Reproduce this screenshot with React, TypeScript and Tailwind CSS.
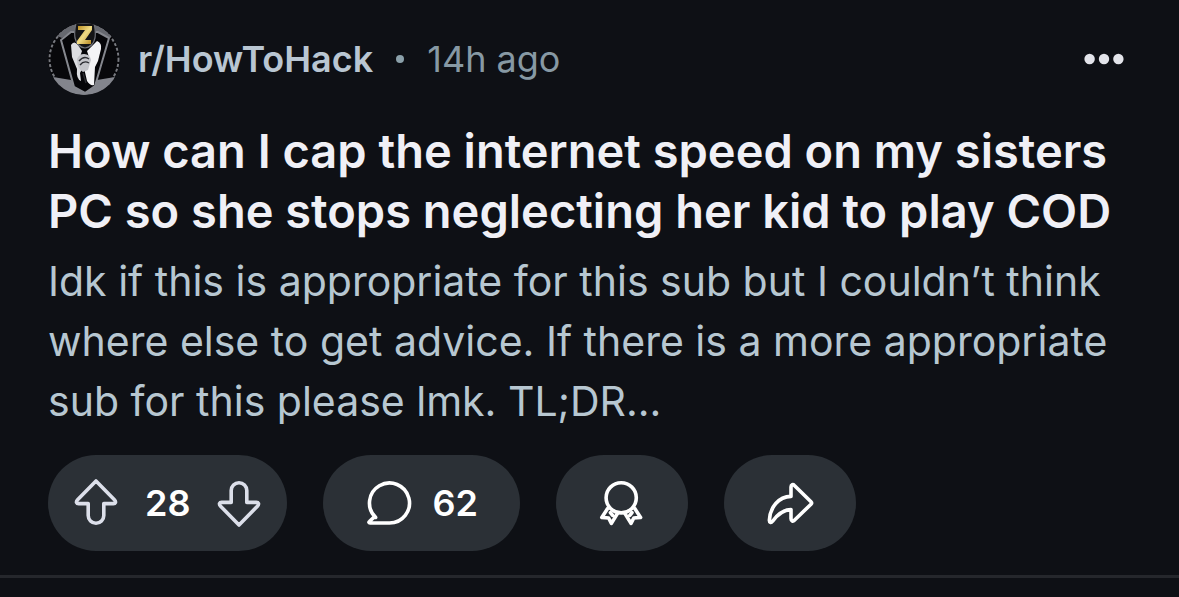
import type { ReactNode } from "react";
import { twMerge } from "tailwind-merge";

const post = {
  community: "r/HowToHack",
  age: "14h ago",
  title:
    "How can I cap the internet speed on my sisters PC so she stops neglecting her kid to play COD",
  body: "Idk if this is appropriate for this sub but I couldn’t think where else to get advice. If there is a more appropriate sub for this please lmk. TL;DR...",
  votes: 28,
  comments: 62,
};

const Icon = ({
  className,
  children,
}: {
  className?: string;
  children: ReactNode;
}) => (
  <svg
    viewBox="0 0 48 48"
    fill="none"
    stroke="currentColor"
    strokeWidth={3.6}
    strokeLinecap="round"
    strokeLinejoin="round"
    aria-hidden="true"
    className={twMerge("size-12 shrink-0", className)}
  >
    {children}
  </svg>
);

const VoteArrow = ({ className }: { className?: string }) => (
  <Icon className={className}>
    <path d="M24 2 42.4 20.8C44.5 23 43.4 24.6 41.4 24.6H31.8V36.4a7.8 7.8 0 0 1-15.6 0V24.6H6.6C4.6 24.6 3.5 23 5.6 20.8Z" />
  </Icon>
);

const Avatar = () => (
  <svg
    viewBox="0 0 72 72"
    role="img"
    aria-label="r/HowToHack icon"
    className="size-18 shrink-0"
  >
    <defs>
      <clipPath id="avatar-clip">
        <circle cx="36" cy="36" r="36" />
      </clipPath>
      <linearGradient id="avatar-gold" x1="0" y1="0" x2="1" y2="1">
        <stop offset="0" stopColor="#b98a1c" />
        <stop offset="0.5" stopColor="#f0dc86" />
        <stop offset="1" stopColor="#b3831b" />
      </linearGradient>
    </defs>
    <g clipPath="url(#avatar-clip)">
      <rect width="72" height="72" fill="#08080b" />
      {/* ring */}
      <circle
        cx="36"
        cy="36"
        r="34.5"
        fill="none"
        stroke="#77797f"
        strokeWidth="2"
        strokeDasharray="3 2"
      />
      <path d="M9 13Q20 0 36 0T63 13L58 15 48 8H24L14 15Z" fill="#66686f" />
      <path d="M5 54 23 57 30 66H44L49 57 67 54 60 72H12Z" fill="#83858d" />
      {/* coffin */}
      <path
        d="M23 9H50L61 15 47 63 37 70 26 64 13 17Z"
        fill="#050508"
        stroke="#85878e"
        strokeWidth="2"
      />
      {/* cuffs */}
      <path d="M23 22Q26 17 30 22L34 28 32 34 35 44 32 50 33 58Q28 56 29 46L24 34Z" fill="#dcdde1" />
      <path d="M49 18Q54 20 53 26L50 38 47 44 46 62Q42 63 39 58L36 45 41 34 39 28Z" fill="#f4f4f6" />
      {/* folded hands */}
      <path d="M29 36Q31 31 36 31 42 31 43 37L40 47 35 49Q29 46 29 36Z" fill="#c4c5ca" />
      <path
        d="M31 38Q36 32 41 36M32 42Q36 37 41 40M35 50 38 60"
        fill="none"
        stroke="#2b2c31"
        strokeWidth="1.4"
      />
      {/* gold badge */}
      <path
        d="M28 0H46Q48 8 47 15 45 24 37 25 29 24 27 15 26 8 28 0Z"
        fill="#141416"
        stroke="#6d6f76"
        strokeWidth="1.2"
      />
      <path d="M30 3H44V7L37 17H43V21H29V18L37 7H30Z" fill="url(#avatar-gold)" />
    </g>
  </svg>
);

const Pill = ({
  className,
  label,
  children,
}: {
  className?: string;
  label: string;
  children: ReactNode;
}) => (
  <button
    type="button"
    aria-label={label}
    className={twMerge(
      "flex h-24 items-center justify-center rounded-full bg-[#2b3036] px-[42px] text-4xl font-semibold text-white",
      className
    )}
  >
    {children}
  </button>
);

const PostHeader = () => (
  <header className="flex items-center">
    <Avatar />
    <div className="ml-[18px] flex items-center gap-[23px] text-4xl">
      <a href="#community" className="font-semibold text-[#b9c6d2]">
        {post.community}
      </a>
      <span className="size-2 rounded-full bg-[#8ba0aa]" />
      <span className="text-[#8799a4]">{post.age}</span>
    </div>
    <button type="button" aria-label="More options" className="ml-auto text-[#e3e4ea]">
      <svg viewBox="0 0 54 48" fill="currentColor" className="h-12 w-[54px]">
        <circle cx="12.6" cy="24" r="5.2" />
        <circle cx="27" cy="24" r="5.2" />
        <circle cx="41.4" cy="24" r="5.2" />
      </svg>
    </button>
  </header>
);

const PostActions = () => (
  <div className="mt-6 flex flex-wrap gap-9">
    <div className="flex h-24 items-center gap-[25px] rounded-full bg-[#2b3036] px-6 text-[#dcdfea]">
      <button type="button" aria-label="Upvote">
        <VoteArrow />
      </button>
      <span className="text-4xl font-semibold text-white">{post.votes}</span>
      <button type="button" aria-label="Downvote">
        <VoteArrow className="rotate-180" />
      </button>
    </div>

    <Pill label="Comments" className="gap-[19px]">
      <Icon>
        <path d="M10.6 38.4A20 20 0 1 1 24.2 44H5C3.8 44 3.6 43.2 4.4 42.5L9.6 37.6" />
      </Icon>
      {post.comments}
    </Pill>

    <Pill label="Give award">
      <Icon>
        <circle cx="23.2" cy="18.8" r="15.1" />
        <path d="M9.6 29.6 3.8 38.4 10.6 39 13.4 44.4 19.4 34.6M12.4 33.6 14.6 36.4" />
        <path d="M36.8 29.6 42.6 38.4 35.8 39 33 44.4 27 34.6M34 33.6 31.8 36.4" />
      </Icon>
    </Pill>

    <Pill label="Share">
      <Icon>
        <path d="M25 8C25 5.4 27 5 28.4 6.5L45 22.8C45.8 23.6 45.8 24.4 45 25.2L28.4 41.2C27 42.7 25 42.2 25 39.8V30.6C17 30.8 11 36 6.6 42.2 5 44.2 3.2 43.4 3.4 41 4.2 28 12.4 17.8 25 17.4Z" />
      </Icon>
    </Pill>
  </div>
);

export default function App() {
  return (
    <main className="min-h-screen bg-[#0e1015] font-['Inter',sans-serif]">
      <article className="border-b-3 border-[#25272c] px-12 pt-[23px] pb-6">
        <PostHeader />
        <h1 className="mt-[26px] text-[47px] leading-[60px] font-semibold text-[#f0f0f6]">
          {post.title}
        </h1>
        <p className="mt-2.5 text-[41px] leading-[60px] text-[#b7c7d1]">{post.body}</p>
        <PostActions />
      </article>
    </main>
  );
}
